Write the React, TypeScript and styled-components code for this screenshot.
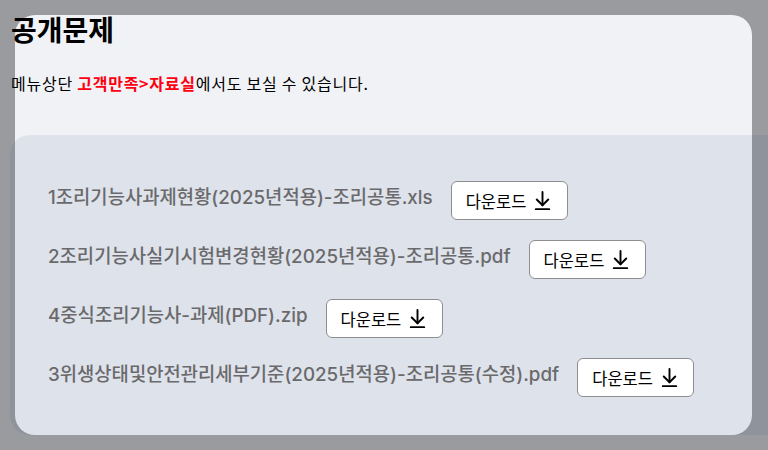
import * as React from 'react';
import styled, { createGlobalStyle } from 'styled-components';
import { ArrowDownToLine } from 'lucide-react';

interface FileItem {
  name: string
}

const files: FileItem[] = [
  { name: '1조리기능사과제현황(2025년적용)-조리공통.xls' },
  { name: '2조리기능사실기시험변경현황(2025년적용)-조리공통.pdf' },
  { name: '4중식조리기능사-과제(PDF).zip' },
  { name: '3위생상태및안전관리세부기준(2025년적용)-조리공통(수정).pdf' },
];

export default function App() {
  return (
    <>
      <GlobalStyle />
      <Page>
        <Card>
          <Header>
            <Title>공개문제</Title>
            <Notice>
              메뉴상단 <Highlight>고객만족&gt;자료실</Highlight>에서도 보실 수 있습니다.
            </Notice>
          </Header>
          <FilePanel>
            {files.map((f: FileItem, i: number) =>
              <FileRow key={`${f.name}_${i}`}>
                <FileName>{f.name}</FileName>
                <DownloadButton type="button">
                  다운로드
                  <ArrowDownToLine size={23} strokeWidth={2} />
                </DownloadButton>
              </FileRow>
            )}
          </FilePanel>
        </Card>
      </Page>
    </>
  );
}

const GlobalStyle = createGlobalStyle`
  html, body {
    margin: 0;
    padding: 0;
    background: #9a9b9f;
    overflow: hidden;
  }
  body {
    font-family: Inter, "Noto Sans CJK KR", "Noto Sans", sans-serif;
  }
`;

const Page = styled.div`
  width: 768px;
  height: 450px;
  padding: 15px 16px 0 15px;
  box-sizing: border-box;
`;

const Card = styled.div`
  height: 420px;
  background: #f1f2f6;
  border-radius: 20px;
  display: flex;
  flex-direction: column;
`;

const Header = styled.div`
  height: 124px;
  margin: -4px 0 0 -4px;
`;

const Title = styled.h1`
  margin: 0;
  font-family: "Noto Sans CJK KR", sans-serif;
  font-size: 28px;
  line-height: 36px;
  font-weight: 700;
  color: #000;
`;

const Notice = styled.p`
  margin: 26px 0 0;
  font-family: "Noto Sans CJK KR", sans-serif;
  font-size: 16px;
  line-height: 20px;
  letter-spacing: 0.75px;
  color: #000;
`;

const Highlight = styled.span`
  color: #ff0010;
  font-weight: 700;
`;

const FilePanel = styled.div`
  flex: 1;
  margin: 0 -40px 0 -5px;
  padding: 46px 0 0 38px;
  background: rgba(40, 70, 125, 0.095);
  border-radius: 20px;
  display: flex;
  flex-direction: column;
  gap: 20px;
`;

const FileRow = styled.div`
  display: flex;
  align-items: center;
  gap: 18px;
`;

const FileName = styled.span`
  font-size: 18.8px;
  line-height: 24px;
  font-weight: 500;
  color: #6a6a6c;
  padding-bottom: 6px;
  white-space: nowrap;
`;

const DownloadButton = styled.button`
  height: 39px;
  width: 117px;
  padding: 0 0 0 14px;
  box-sizing: border-box;
  display: flex;
  align-items: center;
  gap: 5px;
  background: #fff;
  border: 1px solid #8e8e90;
  border-radius: 6px;
  font-family: "Noto Sans CJK KR", sans-serif;
  font-size: 16.5px;
  color: #000;
  cursor: pointer;
`;
